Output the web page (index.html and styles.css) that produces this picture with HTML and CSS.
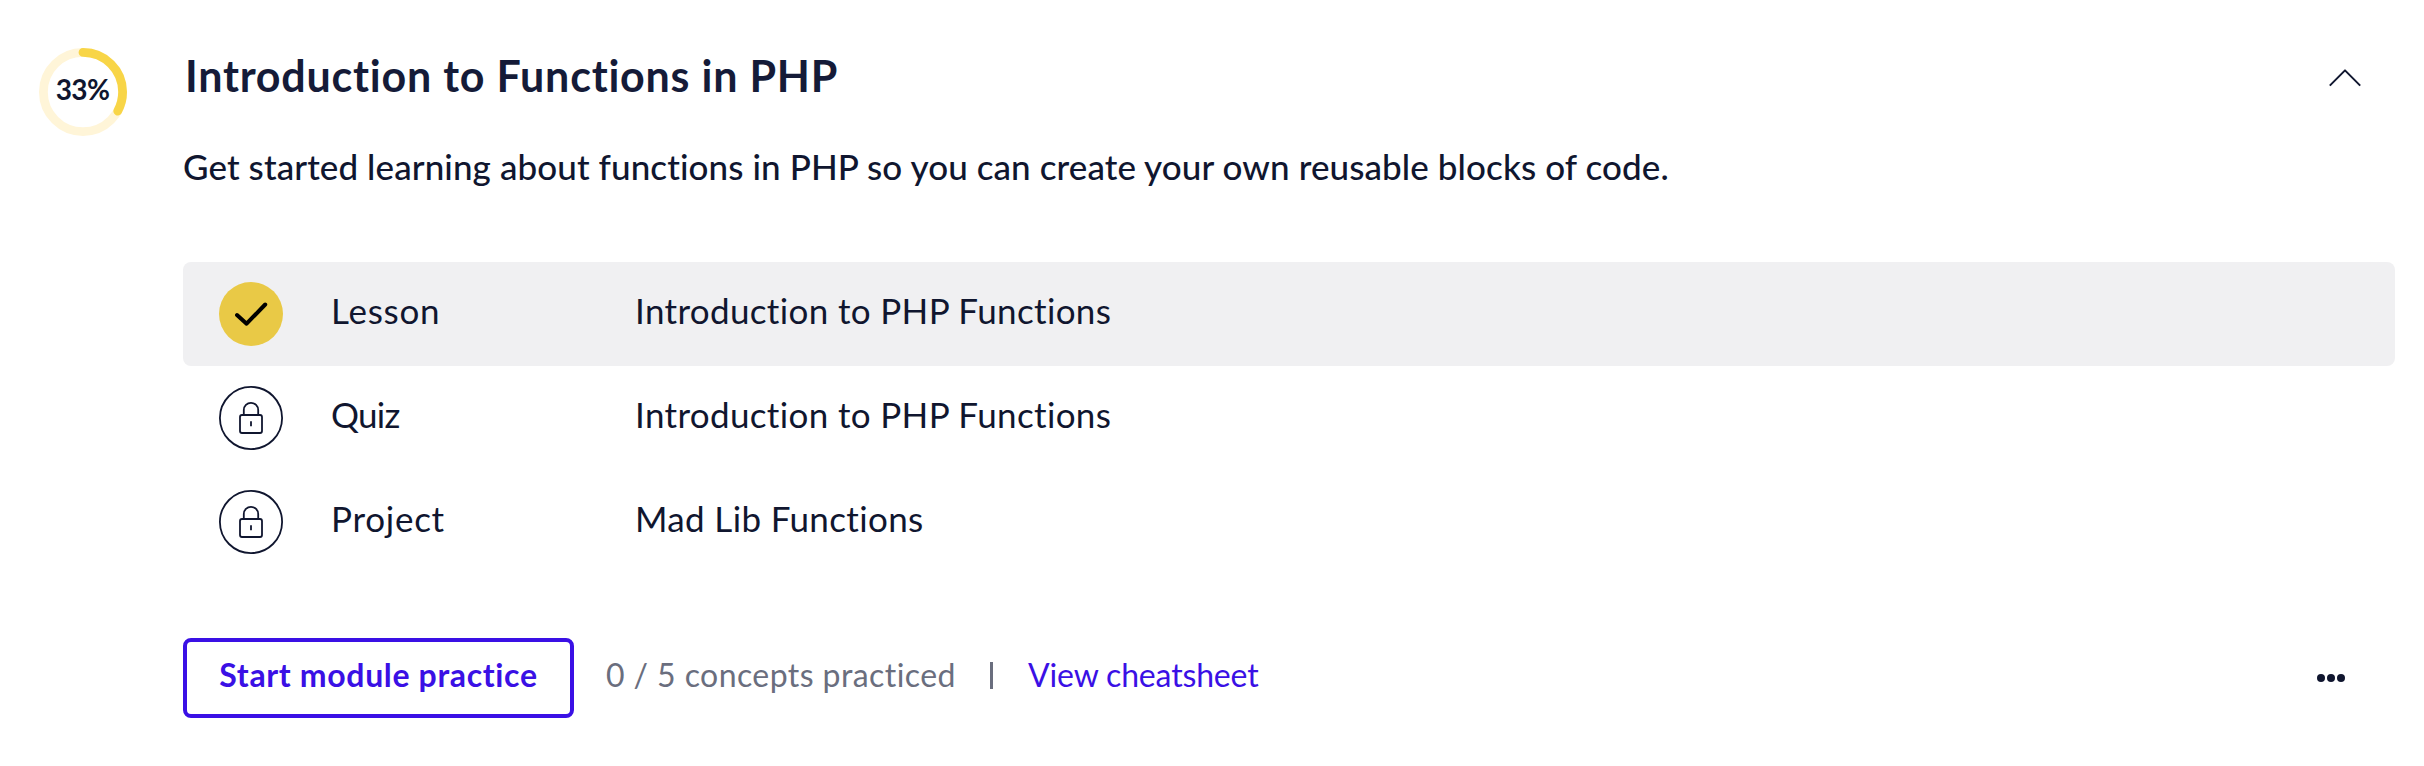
FILE: index.html
```
<!DOCTYPE html>
<html lang="en">
<head>
<meta charset="utf-8">
<title>Introduction to Functions in PHP</title>
<link rel="stylesheet" href="styles.css">
</head>
<body>
<main class="module">
  <div class="progress">
    <svg class="progress-ring" viewBox="0 0 88 88">
      <circle class="ring-track" cx="44" cy="44" r="39.6"/>
      <circle class="ring-value" cx="44" cy="44" r="39.6" pathLength="100" stroke-dasharray="33 100" transform="rotate(-90 44 44)"/>
    </svg>
    <span class="progress-text">33%</span>
  </div>
  <div class="content">
    <header class="head">
      <h2 class="title">Introduction to Functions in PHP</h2>
      <svg class="chevron" viewBox="0 0 32 32"><path d="M.8 23.6 16 8.4l15.2 15.2"/></svg>
    </header>
    <p class="description">Get started learning about functions in PHP so you can create your own reusable blocks of code.</p>
    <ul class="items">
      <li class="item item-active">
        <svg class="status" viewBox="0 0 64 64"><circle class="done" cx="32" cy="32" r="32"/><path class="check" d="M18 33l9.6 8.7L46.2 22.5"/></svg>
        <span class="kind kind-lesson">Lesson</span>
        <span class="name">Introduction to PHP Functions</span>
      </li>
      <li class="item">
        <svg class="status" viewBox="0 0 64 64"><g class="lock"><circle cx="32" cy="32" r="31.1"/><rect x="21" y="29" width="22" height="18" rx="2"/><path d="M24.8 29v-5a7.2 7.2 0 0 1 14.4 0v5M32 35.3v5"/></g></svg>
        <span class="kind kind-quiz">Quiz</span>
        <span class="name">Introduction to PHP Functions</span>
      </li>
      <li class="item">
        <svg class="status" viewBox="0 0 64 64"><g class="lock"><circle cx="32" cy="32" r="31.1"/><rect x="21" y="29" width="22" height="18" rx="2"/><path d="M24.8 29v-5a7.2 7.2 0 0 1 14.4 0v5M32 35.3v5"/></g></svg>
        <span class="kind kind-project">Project</span>
        <span class="name">Mad Lib Functions</span>
      </li>
    </ul>
    <footer class="actions">
      <button class="practice">Start module practice</button>
      <span class="count">0 / 5 concepts practiced</span>
      <span class="divider"></span>
      <a class="cheatsheet">View cheatsheet</a>
      <svg class="more" viewBox="0 0 28 8"><circle cx="4" cy="4" r="4"/><circle cx="14" cy="4" r="4"/><circle cx="24" cy="4" r="4"/></svg>
    </footer>
  </div>
</main>
</body>
</html>
```
FILE: styles.css
```
* { box-sizing: border-box; }
body {
  margin: 0;
  background: #fff;
  color: #10162f;
  font-family: "Lato", sans-serif;
}
svg { display: block; flex: none; }
.module {
  display: flex;
  gap: 56px;
  height: 766px;
  padding: 48px 29px 48px 39px;
}
.progress {
  display: grid;
  flex: none;
  width: 88px;
  height: 88px;
}
.progress-ring, .progress-text { grid-area: 1 / 1; }
.progress-ring { width: 88px; height: 88px; fill: none; stroke-width: 8.8; }
.ring-track { stroke: #fff5d8; }
.ring-value { stroke: #f8d547; stroke-linecap: round; }
.progress-text {
  padding: 0 1px 5px 0;
  font-size: 28px;
  font-weight: 700;
  line-height: 83px;
  letter-spacing: -.6px;
  text-align: center;
}
.content { flex: 1; }
.head { display: flex; justify-content: space-between; padding: 2px 34px 0 2px; }
.title {
  margin: 0;
  color: #151b38;
  font-size: 43px;
  font-weight: 700;
  line-height: 52px;
  letter-spacing: .77px;
}
.chevron {
  width: 32px;
  height: 32px;
  margin-top: 12px;
  fill: none;
  stroke: #10162f;
  stroke-width: 2;
  stroke-linejoin: round;
}
.description {
  margin: 38px 0 0;
  font-size: 35px;
  font-weight: 500;
  line-height: 52px;
  letter-spacing: .09px;
  white-space: nowrap;
}
.items { margin: 70px 0 0; padding: 0; list-style: none; }
.item {
  display: flex;
  align-items: center;
  height: 104px;
  padding-left: 36px;
  border-radius: 8px;
  font-size: 35px;
  line-height: 52px;
}
.item-active { background: #f0f0f2; }
.status { width: 64px; height: 64px; margin-right: 48px; }
.done { fill: #e9c946; }
.check { fill: none; stroke: #000; stroke-width: 4; stroke-linecap: round; stroke-linejoin: round; }
.lock { fill: none; stroke: #10162f; stroke-width: 1.8; }
.kind { width: 304px; padding-bottom: 9px; }
.kind-lesson, .kind-project { letter-spacing: .74px; }
.kind-quiz { letter-spacing: -.7px; }
.name { padding-bottom: 9px; letter-spacing: .35px; }
.actions {
  display: flex;
  align-items: center;
  height: 80px;
  margin-top: 64px;
  padding-right: 50px;
  font-size: 32px;
  line-height: 48px;
}
.practice {
  width: 391px;
  height: 80px;
  padding: 0 0 7px;
  border: 4px solid #3a10e5;
  border-radius: 8px;
  background: #fff;
  color: #3a10e5;
  font: 700 32px/48px "Lato", sans-serif;
  letter-spacing: .65px;
}
.count {
  width: 385px;
  padding: 0 0 7px 32px;
  color: #6a6e7e;
  letter-spacing: .42px;
  white-space: nowrap;
}
.divider { width: 3px; height: 27px; margin: 0 35px 5px 31px; background: #6a6e7e; }
.cheatsheet { padding-bottom: 7px; color: #3a10e5; letter-spacing: -.15px; }
.more { width: 28px; height: 8px; margin-left: auto; fill: #10162f; }
```
